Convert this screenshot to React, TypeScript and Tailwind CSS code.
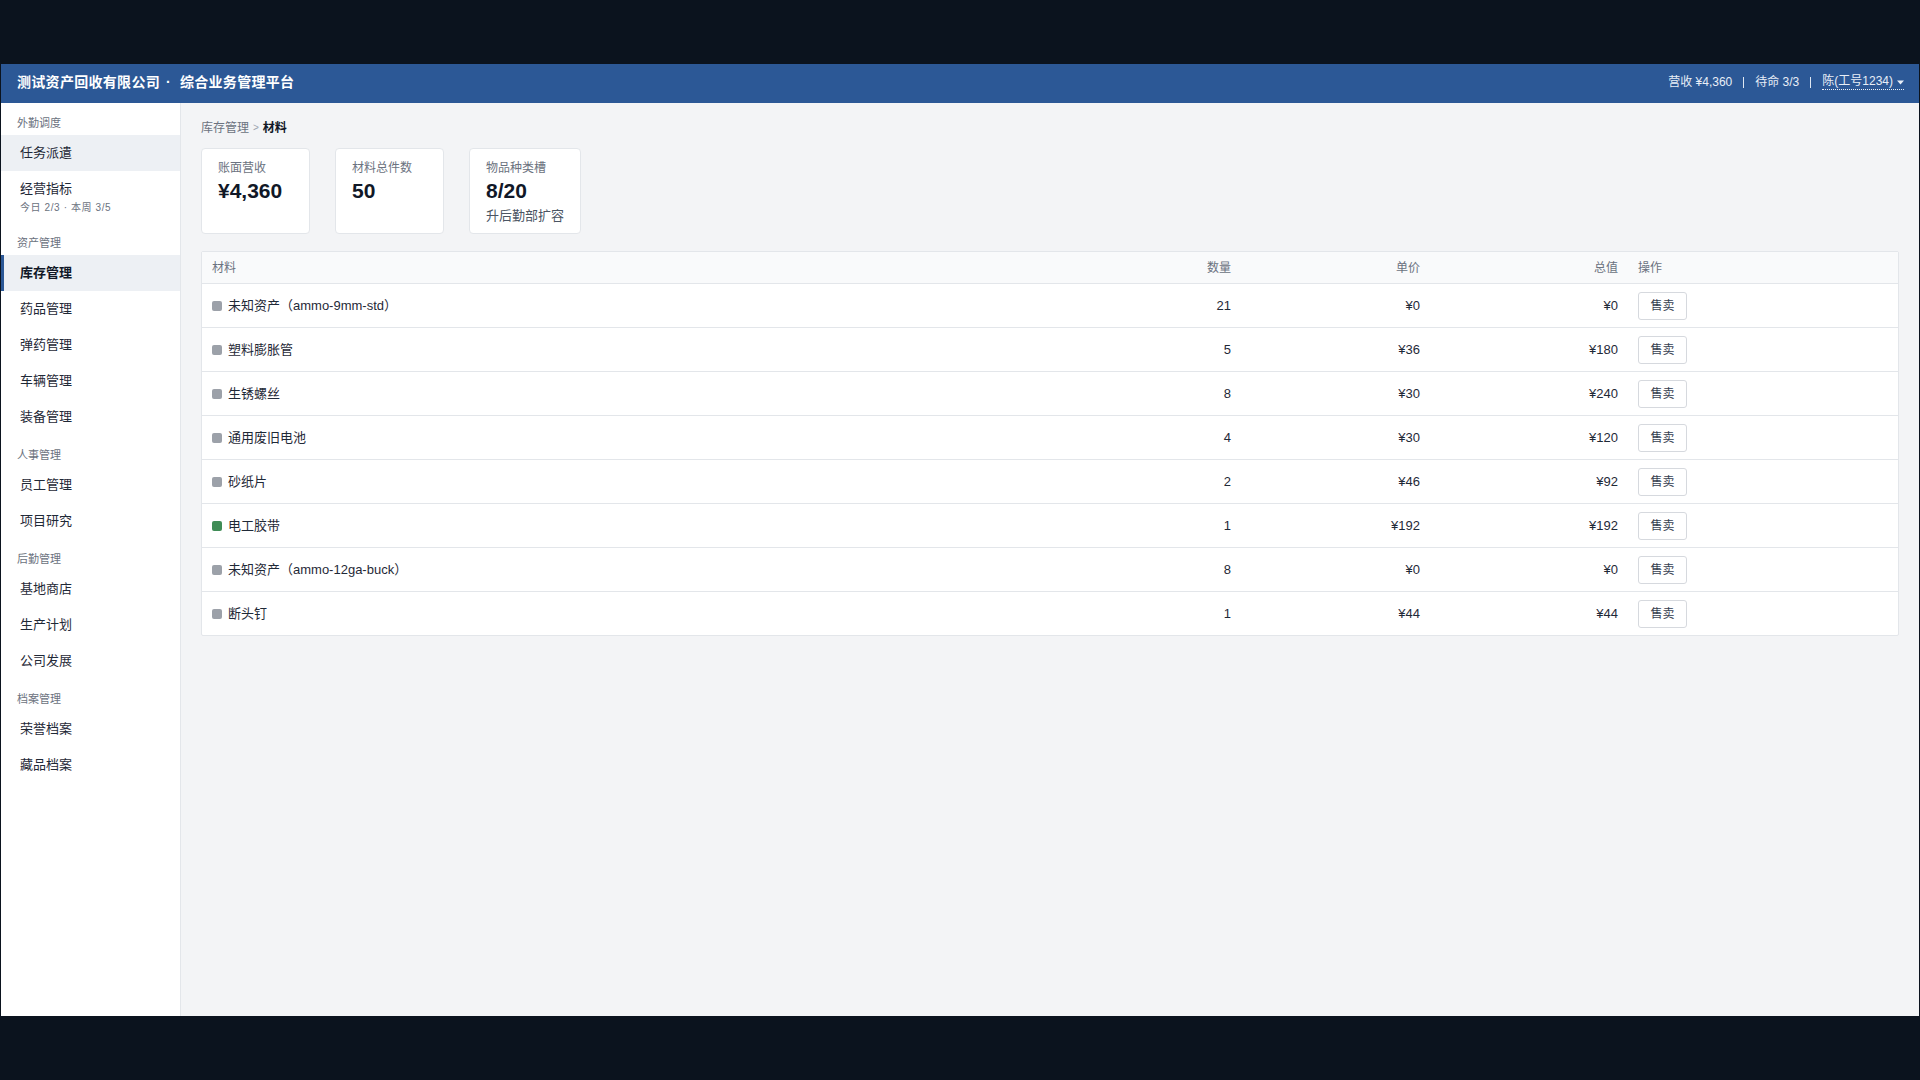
import React from "react";

type NavItem = { label: string; sub?: string; active?: boolean; hover?: boolean };
type NavGroup = { title: string; items: NavItem[] };

const nav: NavGroup[] = [
  {
    title: "外勤调度",
    items: [
      { label: "任务派遣", hover: true },
      { label: "经营指标", sub: "今日 2/3 · 本周 3/5" },
    ],
  },
  {
    title: "资产管理",
    items: [
      { label: "库存管理", active: true },
      { label: "药品管理" },
      { label: "弹药管理" },
      { label: "车辆管理" },
      { label: "装备管理" },
    ],
  },
  { title: "人事管理", items: [{ label: "员工管理" }, { label: "项目研究" }] },
  {
    title: "后勤管理",
    items: [{ label: "基地商店" }, { label: "生产计划" }, { label: "公司发展" }],
  },
  { title: "档案管理", items: [{ label: "荣誉档案" }, { label: "藏品档案" }] },
];

type Row = { name: string; qty: number; price: number; green?: boolean };

const rows: Row[] = [
  { name: "未知资产（ammo-9mm-std）", qty: 21, price: 0 },
  { name: "塑料膨胀管", qty: 5, price: 36 },
  { name: "生锈螺丝", qty: 8, price: 30 },
  { name: "通用废旧电池", qty: 4, price: 30 },
  { name: "砂纸片", qty: 2, price: 46 },
  { name: "电工胶带", qty: 1, price: 192, green: true },
  { name: "未知资产（ammo-12ga-buck）", qty: 8, price: 0 },
  { name: "断头钉", qty: 1, price: 44 },
];

const cols = "grid grid-cols-[919px_120px_189px_198px_1fr]";

function Header() {
  return (
    <header className="h-[39px] shrink-0 bg-[#2c5896] flex items-center justify-between pl-[16px] pr-[15px] pb-[3px]">
      <div className="flex items-center text-white text-[14px] font-bold tracking-[0.3px]">
        <span>测试资产回收有限公司</span>
        <span className="ml-[6px] mr-[9px]">·</span>
        <span>综合业务管理平台</span>
      </div>
      <div className="flex items-center gap-[11px] text-[12px] text-[#e8eef7]">
        <span>营收 ¥4,360</span>
        <span className="w-px h-[11px] bg-[#dfe7f2]" />
        <span>待命 3/3</span>
        <span className="w-px h-[11px] bg-[#dfe7f2]" />
        <span className="flex items-center gap-[4px] border-b border-dotted border-[#e8eef7] leading-[15px]">
          陈(工号1234)
          <svg width="7" height="5" viewBox="0 0 7 5" className="mt-[1px]">
            <path d="M0 0.5 L7 0.5 L3.5 4.5 Z" fill="#e8eef7" />
          </svg>
        </span>
      </div>
    </header>
  );
}

function Sidebar() {
  return (
    <aside className="w-[180px] shrink-0 bg-white border-r border-[#e3e6ea]">
      {nav.map((g) => (
        <div key={g.title}>
          <div className="pl-[16px] pt-[12px] pb-[4px] text-[11px] leading-[16px] text-[#6b7280]">
            {g.title}
          </div>
          {g.items.map((it) =>
            it.sub ? (
              <div
                key={it.label}
                className="border-l-[3px] border-transparent pl-[16px] py-[8px]"
              >
                <div className="text-[13px] leading-[20px] text-[#1f2937]">{it.label}</div>
                <div className="mt-[2px] text-[10px] leading-[14px] tracking-[0.6px] text-[#6b7280]">
                  {it.sub}
                </div>
              </div>
            ) : (
              <div
                key={it.label}
                className={
                  it.active
                    ? "h-[36px] flex items-center border-l-[3px] border-[#2c5896] bg-[#edf0f4] pl-[16px] text-[13px] font-bold text-[#111827]"
                    : it.hover
                    ? "h-[36px] flex items-center border-l-[3px] border-transparent bg-[#edf0f4] pl-[16px] text-[13px] text-[#1f2937]"
                    : "h-[36px] flex items-center border-l-[3px] border-transparent pl-[16px] text-[13px] text-[#1f2937]"
                }
              >
                {it.label}
              </div>
            )
          )}
        </div>
      ))}
    </aside>
  );
}

function StatCard({ label, value, sub }: { label: string; value: string; sub?: string }) {
  return (
    <div className="min-w-[109px] bg-white border border-[#e3e6ea] rounded-[4px] px-[16px] pt-[11px] pb-[7px]">
      <div className="text-[12px] leading-[16px] text-[#6b7280]">{label}</div>
      <div className="text-[21px] leading-[30px] font-bold text-[#111827]">{value}</div>
      {sub && <div className="text-[13px] leading-[20px] text-[#4b5563]">{sub}</div>}
    </div>
  );
}

function Table() {
  return (
    <div className="mt-[17px] bg-white border border-[#e3e6ea] rounded-[2px]">
      <div
        className={`${cols} h-[32px] items-center bg-[#f9fafb] border-b border-[#e3e6ea] text-[12px] text-[#6b7280]`}
      >
        <div className="pl-[10px]">材料</div>
        <div className="pr-[10px] text-right">数量</div>
        <div className="pr-[10px] text-right">单价</div>
        <div className="pr-[10px] text-right">总值</div>
        <div className="pl-[10px]">操作</div>
      </div>
      {rows.map((r, i) => (
        <div
          key={r.name}
          className={
            i < rows.length - 1
              ? `${cols} h-[44px] items-center border-b border-[#e3e6ea] text-[13px] text-[#1f2937]`
              : `${cols} h-[43px] items-center text-[13px] text-[#1f2937]`
          }
        >
          <div className="pl-[10px] flex items-center gap-[6px]">
            <span
              className={
                r.green
                  ? "w-[10px] h-[10px] rounded-[2px] bg-[#3f8c56]"
                  : "w-[10px] h-[10px] rounded-[2px] bg-[#9ca1a9]"
              }
            />
            <span>{r.name}</span>
          </div>
          <div className="pr-[10px] text-right">{r.qty}</div>
          <div className="pr-[10px] text-right">¥{r.price}</div>
          <div className="pr-[10px] text-right">¥{r.qty * r.price}</div>
          <div className="pl-[10px]">
            <button className="w-[49px] h-[28px] bg-white border border-[#d6d9de] rounded-[3px] text-[12px] text-[#374151]">
              售卖
            </button>
          </div>
        </div>
      ))}
    </div>
  );
}

export default function App() {
  return (
    <div className="w-[1920px] h-[1080px] bg-[#0b131e] flex items-center justify-center font-['Liberation_Sans','Noto_Sans_CJK_SC',sans-serif]">
      <div className="w-[1918px] h-[952px] flex flex-col bg-[#f3f4f6] overflow-hidden">
        <Header />
        <div className="flex flex-1 min-h-0">
          <Sidebar />
          <main className="flex-1 px-[20px] pt-[16px]">
            <div className="flex items-center text-[12px] leading-[18px]">
              <span className="text-[#6b7280]">库存管理</span>
              <span className="mx-[4px] text-[10px] text-[#9ca3af]">&gt;</span>
              <span className="font-bold text-[#111827]">材料</span>
            </div>
            <div className="mt-[11px] flex gap-[25px]">
              <StatCard label="账面营收" value="¥4,360" />
              <StatCard label="材料总件数" value="50" />
              <StatCard label="物品种类槽" value="8/20" sub="升后勤部扩容" />
            </div>
            <Table />
          </main>
        </div>
      </div>
    </div>
  );
}
